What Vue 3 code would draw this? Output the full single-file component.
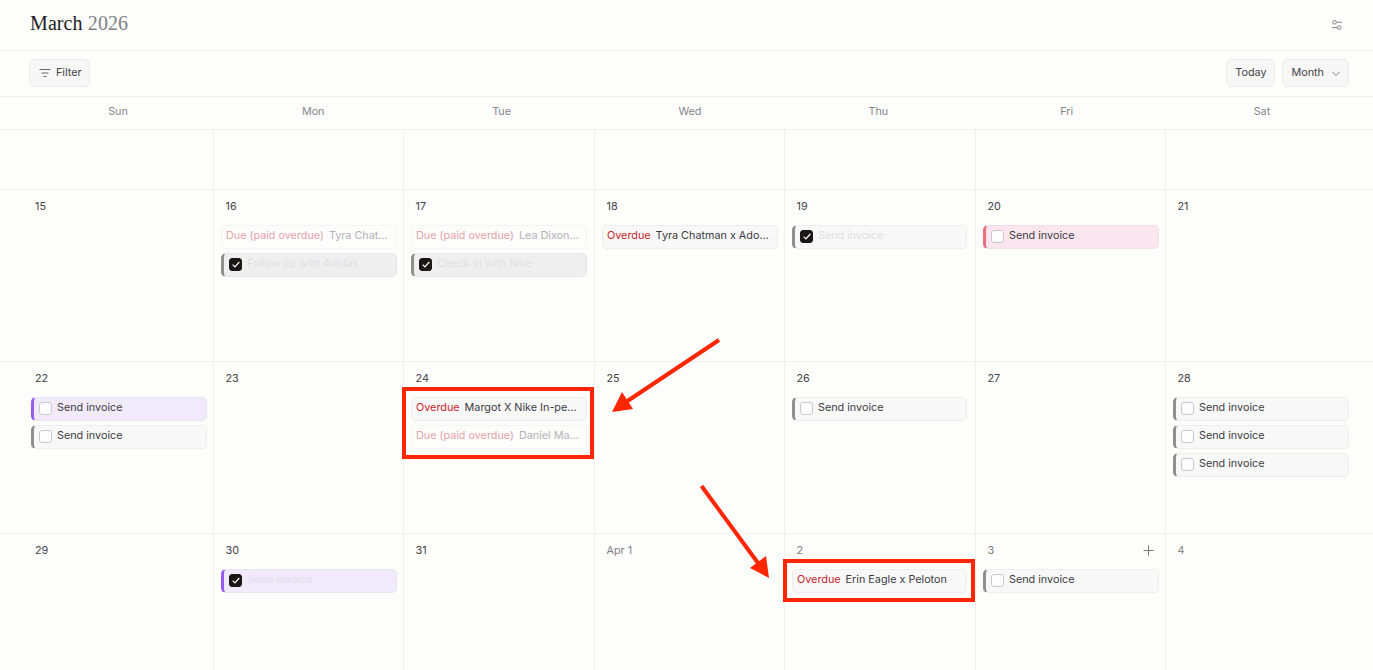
<template>
  <div class="page">
    <header class="title-bar">
      <h1 class="title">March <span class="year">2026</span></h1>
      <svg class="settings" width="10" height="10" viewBox="0 0 10 10" fill="none" stroke="#85858a" stroke-width="1">
        <circle cx="2.5" cy="2.3" r="1.8" />
        <path d="M4.3 2.3H10" />
        <circle cx="7.3" cy="7.6" r="1.8" />
        <path d="M0 7.6H5.5" />
      </svg>
    </header>

    <div class="toolbar">
      <button class="btn filter">
        <svg width="12" height="10" viewBox="0 0 12 10" fill="none" stroke="#66666a" stroke-width="1">
          <path d="M.5 1.5h11M2.5 5h7M4.5 8.5h3" />
        </svg>
        <span>Filter</span>
      </button>
      <div class="toolbar-right">
        <button class="btn today"><span>Today</span></button>
        <button class="btn month">
          <span>Month</span>
          <svg width="10" height="10" viewBox="0 0 10 10" fill="none" stroke="#85858a" stroke-width="1">
            <path d="M1.5 4 5 7.5 8.5 4" />
          </svg>
        </button>
      </div>
    </div>

    <div class="weekdays">
      <div v-for="d in weekdays" :key="d">{{ d }}</div>
    </div>

    <div class="grid">
      <div v-for="cell in cells" :key="cell.key" class="cell">
        <div v-if="!cell.top" class="date" :class="{ muted: cell.muted }">
          <span>{{ cell.label }}</span>
          <svg v-if="cell.add" class="plus" width="11" height="11" viewBox="0 0 11 11" stroke="#77777a" stroke-width="1">
            <path d="M5.5 .5v10M.5 5.5h10" />
          </svg>
        </div>
        <div class="events">
          <div v-for="(ev, i) in cell.events" :key="i" class="event" :class="ev.kind">
            <template v-if="ev.status">
              <span class="status">{{ ev.status }}</span>
              <span class="name">{{ ev.name }}</span>
            </template>
            <template v-else>
              <span class="check" :class="{ done: ev.done }">
                <svg v-if="ev.done" width="8" height="7" viewBox="0 0 8 7" fill="none" stroke="#fff" stroke-width="1.2">
                  <path d="M.7 3.6 2.9 5.8 7.3 1" />
                </svg>
              </span>
              <span class="name">{{ ev.name }}</span>
            </template>
          </div>
        </div>
      </div>
    </div>

    <svg class="annotations" width="1373" height="670" viewBox="0 0 1373 670">
      <rect x="404" y="389" width="188" height="68" fill="none" stroke="#ff2600" stroke-width="4" />
      <rect x="785" y="561" width="188" height="39" fill="none" stroke="#ff2600" stroke-width="4" />
      <path d="M719 340 626 402" stroke="#ff2600" stroke-width="4" fill="none" />
      <path d="M612 412 622 392 633 409Z" fill="#ff2600" />
      <path d="M701.5 486 758 563" stroke="#ff2600" stroke-width="4" fill="none" />
      <path d="M769 578 750 568 766 556Z" fill="#ff2600" />
    </svg>
  </div>
</template>

<script setup>
const weekdays = ['Sun', 'Mon', 'Tue', 'Wed', 'Thu', 'Fri', 'Sat']

const task = (name, kind = 'grey', done = false) => ({ name, kind, done })
const invoice = (kind = 'grey', done = false) => task('Send invoice', kind + (done ? ' finished' : ''), done)
const overdue = (name) => ({ status: 'Overdue', name, kind: 'overdue' })
const paid = (name) => ({ status: 'Due (paid overdue)', name, kind: 'paid' })

const rows = [
  [
    ['15'],
    ['16', [paid('Tyra Chatman x Adidas'), task('Follow up with Adidas', 'dark finished', true)]],
    ['17', [paid('Lea Dixon x Nike Campaign'), task('Check in with Nike', 'dark finished', true)]],
    ['18', [overdue('Tyra Chatman x Adobe Campaign')]],
    ['19', [invoice('grey', true)]],
    ['20', [invoice('pink')]],
    ['21']
  ],
  [
    ['22', [invoice('purple'), invoice()]],
    ['23'],
    ['24', [overdue('Margot X Nike In-person Shoot'), paid('Daniel Marsh x Nike Campaign')]],
    ['25'],
    ['26', [invoice()]],
    ['27'],
    ['28', [invoice(), invoice(), invoice()]]
  ],
  [
    ['29'],
    ['30', [invoice('purple', true)]],
    ['31'],
    ['Apr 1', [], { muted: true }],
    ['2', [overdue('Erin Eagle x Peloton')], { muted: true }],
    ['3', [invoice()], { muted: true, add: true }],
    ['4', [], { muted: true }]
  ]
]

const cells = [
  ...weekdays.map((d) => ({ key: 'top-' + d, top: true, events: [] })),
  ...rows.flat().map(([label, events = [], opts = {}]) => ({ key: label, label, events, ...opts }))
]
</script>

<style>
html,
body {
  margin: 0;
  height: 670px;
  overflow: hidden;
  background: #fdfdfc;
}
</style>

<style scoped>
.page {
  position: relative;
  width: 1373px;
  height: 670px;
  overflow: hidden;
  background: #fdfdfc;
  font-family: Inter, "Liberation Sans", sans-serif;
  color: #333336;
}

.title-bar {
  height: 50px;
  padding: 0 24px 0 30px;
  display: flex;
  align-items: center;
  justify-content: space-between;
  border-bottom: 1px solid #efefee;
}

.title {
  margin: 0 0 4px;
  font: 400 20px "Liberation Serif", serif;
  letter-spacing: 0.1px;
  color: #1c1c1e;
}

.year {
  color: #808083;
}

.settings {
  margin-right: 7px;
}

.toolbar {
  box-sizing: border-box;
  height: 46px;
  padding: 0 24px 2px 29px;
  display: flex;
  align-items: center;
  justify-content: space-between;
  border-bottom: 1px solid #efefee;
}

.toolbar-right {
  display: flex;
  gap: 7px;
}

.btn {
  box-sizing: border-box;
  height: 28px;
  padding: 0 9px;
  display: flex;
  align-items: center;
  gap: 5px;
  border: 1px solid #ebebea;
  border-radius: 6px;
  background: #f7f7f7;
  font: 400 10.8px Inter, sans-serif;
  color: #444447;
}

.btn span {
  margin-bottom: 1px;
}

.filter {
  padding: 0 7px 0 9px;
}

.today {
  padding: 0 8px;
}

.month {
  padding: 0 7px 0 8px;
  gap: 7px;
}

.weekdays {
  box-sizing: border-box;
  height: 33px;
  padding: 0 11px 4px 17px;
  display: grid;
  grid-template-columns: 202px repeat(5, 188.4px) 202px;
  align-items: center;
  text-align: center;
  font-size: 10.8px;
  color: #868689;
  border-bottom: 1px solid #efefee;
}

.grid {
  display: grid;
  grid-template-columns: 214px 190px 191px 190px 191px 190px 207px;
  grid-template-rows: 60px 172px 172px 137px;
}

.cell {
  box-sizing: border-box;
  padding: 0 6px 0 7px;
  border-right: 1px solid #efefee;
  border-bottom: 1px solid #efefee;
}

.cell:nth-child(7n + 1) {
  padding-left: 31px;
}

.cell:nth-child(7n) {
  padding-right: 24px;
  border-right: 0;
}

.date {
  box-sizing: border-box;
  height: 35px;
  padding: 10px 5px 0 4.5px;
  display: flex;
  justify-content: space-between;
  align-items: flex-start;
  font-size: 10.8px;
  line-height: 14px;
  color: #444447;
}

.cell:nth-child(7n + 1) .date {
  padding-left: 4px;
}

.date.muted {
  color: #808083;
}

.plus {
  margin: 1px 0 0;
}

.events {
  width: 176px;
  display: flex;
  flex-direction: column;
  gap: 4px;
}

.cell:nth-child(7n + 5) .events {
  width: 175px;
}

.event {
  box-sizing: border-box;
  height: 24px;
  padding: 0 6px 0 4px;
  display: flex;
  align-items: center;
  gap: 5px;
  border: 1px solid #ededec;
  border-radius: 5px;
  background: #f8f8f8;
  font-size: 10.8px;
  white-space: nowrap;
  overflow: hidden;
}

.name,
.status {
  margin-bottom: 3px;
}

.name {
  overflow: hidden;
  text-overflow: ellipsis;
  color: #3c3c3f;
}

.status {
  flex: none;
  color: #c8232c;
}

.paid {
  background: #fdfdfc;
  border-color: #f4f4f3;
}

.paid .status {
  color: #e5a3a8;
}

.paid .name {
  color: #b2b2b4;
}

.grey,
.dark,
.pink,
.purple {
  padding-left: 5px;
  border-left: 3px solid #8f8f8f;
}

.dark {
  background: #f0eff0;
  border-color: #e6e4e6;
  border-left-color: #8f8f8f;
}

.pink {
  background: #fbe6ef;
  border-color: #f0e0e6;
  border-left-color: #ee6f7c;
}

.purple {
  background: #f1eafb;
  border-color: #e9e4f2;
  border-left-color: #9a5cf0;
}

.finished .name {
  color: #dfdedf;
}

.purple.finished .name {
  color: #e4deed;
}

.check {
  flex: none;
  box-sizing: border-box;
  width: 13px;
  height: 13px;
  margin-bottom: 1px;
  display: flex;
  align-items: center;
  justify-content: center;
  border: 1px solid #c9c9c9;
  border-radius: 3px;
  background: #fdfdfd;
}

.check.done {
  border-color: #1c1715;
  background: #1c1715;
}

.annotations {
  position: absolute;
  top: 0;
  left: 0;
  pointer-events: none;
}
</style>
